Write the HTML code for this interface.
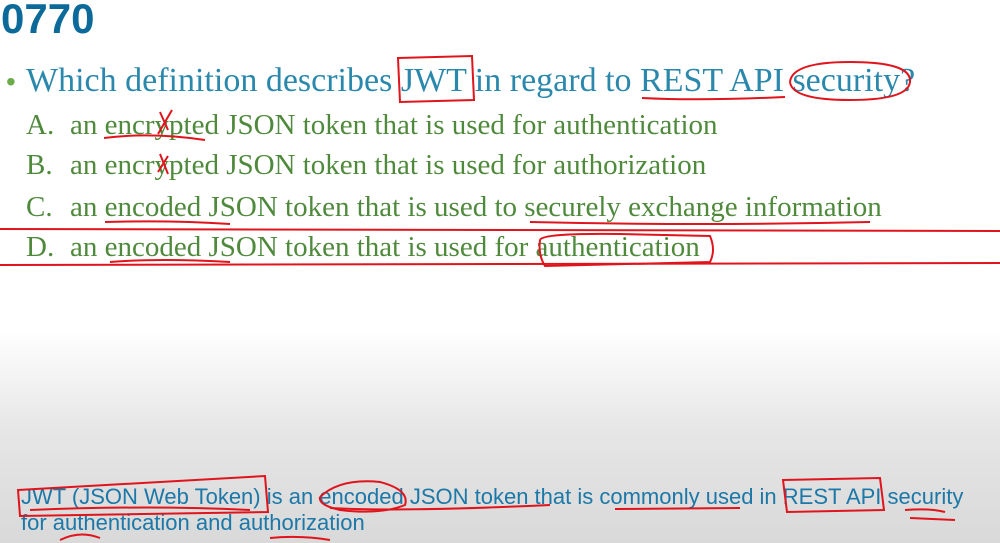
<!DOCTYPE html>
<html><head><meta charset="utf-8"><style>
body{margin:0;width:1000px;height:543px;overflow:hidden;position:relative;
background:linear-gradient(to bottom,#fff 0,#fff 330px,#e6e6e6 430px,#d9d9d9 543px);font-family:"Liberation Serif",serif}
.t{position:absolute;white-space:nowrap}
#title{left:1px;top:-5px;font:bold 42px "Liberation Sans",sans-serif;color:#0b6a99}
#q{left:26px;top:62px;font-size:34px;color:#2b88ad}
#bul{left:6px;top:66px;font:28px "Liberation Sans",sans-serif;color:#6aab4a}
.o{left:26px;font-size:29px;color:#4f8a3c}
.o span{display:inline-block;width:44px}
.b{font:22px "Liberation Sans",sans-serif;color:#1b78a8;left:21px}
</style></head><body>
<div class="t" id="title">0770</div>
<div class="t" id="bul">•</div>
<div class="t" id="q">Which definition describes JWT in regard to REST API security?</div>
<div class="t o" style="top:109px"><span>A.</span>an encrypted JSON token that is used for authentication</div>
<div class="t o" style="top:149px"><span>B.</span>an encrypted JSON token that is used for authorization</div>
<div class="t o" style="top:191px"><span>C.</span>an encoded JSON token that is used to securely exchange information</div>
<div class="t o" style="top:231px"><span>D.</span>an encoded JSON token that is used for authentication</div>
<div class="t b" style="top:484px">JWT (JSON Web Token) is an encoded JSON token that is commonly used in REST API security</div>
<div class="t b" style="top:510px">for authentication and authorization</div>
<svg width="1000" height="543" style="position:absolute;left:0;top:0" fill="none" stroke="#e0141c" stroke-width="2">
<path d="M398 58 L472 56 L474 100 L400 102 Z"/>
<path d="M790 82 Q792 62 850 62 Q912 62 910 82 Q908 100 850 100 Q792 100 790 82"/>
<path d="M642 98 Q700 101 785 97"/>
<path d="M0 229 L1000 231 M0 265 L1000 263"/>
<path d="M540 240 Q542 233 620 234 L710 236 Q716 250 710 262 L545 266 Q538 255 540 240"/>
<path d="M160 112 L168 130 M172 110 L158 134"/>
<path d="M160 154 L168 174 M168 156 L158 172"/>
<path d="M104 138 Q150 132 205 140"/>
<path d="M105 222 Q170 220 230 224 M110 262 Q160 258 230 262 M530 222 Q700 226 870 222"/>
<path d="M18 490 L265 476 L268 512 L20 516 Z"/>
<path d="M320 497 Q340 478 380 482 Q410 490 405 505 Q380 515 340 510 Q318 505 320 497"/>
<path d="M783 480 L880 478 L884 510 L787 512 Z"/>
<path d="M330 508 Q400 512 550 505 M615 509 L740 508 M905 510 Q930 508 945 512 M910 518 L955 520"/>
<path d="M30 510 Q150 505 250 510 M60 540 Q80 530 100 538 M270 538 Q300 535 330 540"/>
</svg>
</body></html>
